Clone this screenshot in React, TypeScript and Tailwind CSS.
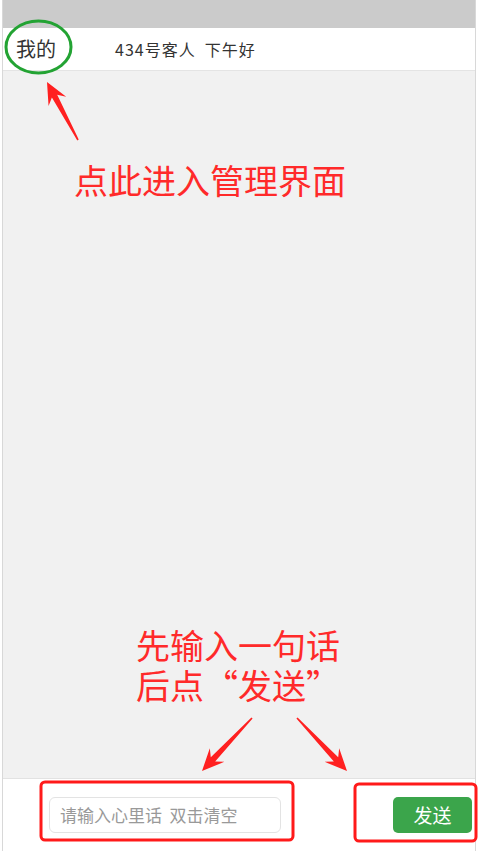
import React from "react";

const FONT = {
  fontFamily: '"Noto Sans CJK SC", "Noto Sans", sans-serif',
};

function Arrow({
  x1,
  y1,
  x2,
  y2,
}: {
  x1: number;
  y1: number;
  x2: number;
  y2: number;
}) {
  // tail at (x1,y1), tip at (x2,y2)
  const dx = x2 - x1;
  const dy = y2 - y1;
  const len = Math.hypot(dx, dy);
  const ux = dx / len;
  const uy = dy / len;
  const px = -uy;
  const py = ux;
  const headLen = 22;
  const headW = 10;
  const bx = x2 - ux * headLen;
  const by = y2 - uy * headLen;
  const neckW = 3;
  const nx = x2 - ux * (headLen - 6);
  const ny = y2 - uy * (headLen - 6);
  const pts = [
    [x1 + px * 0.8, y1 + py * 0.8],
    [nx + px * neckW, ny + py * neckW],
    [bx + px * headW, by + py * headW],
    [x2, y2],
    [bx - px * headW, by - py * headW],
    [nx - px * neckW, ny - py * neckW],
    [x1 - px * 0.8, y1 - py * 0.8],
  ]
    .map((p) => p.join(","))
    .join(" ");
  return <polygon points={pts} fill="#ff2020" />;
}

export default function App() {
  return (
    <div
      className="relative flex h-[851px] w-[478px] flex-col overflow-hidden bg-white"
      style={FONT}
    >
      <div className="mx-[2px] flex flex-1 flex-col border-x border-[#d8d8d8]">
        <div className="h-[28px] bg-[#cbcbcb]" />
        <div className="flex h-[43px] items-center border-b border-[#e4e4e4] bg-white">
          <span className="ml-[13px] text-[20px] text-[#333]">我的</span>
          <span className="ml-[59px] text-[16px] tracking-[1px] text-[#333]">
            434号客人&nbsp;&nbsp;下午好
          </span>
        </div>
        <div className="flex-1 bg-[#f1f1f1]" />
        <div className="flex h-[73px] items-center border-t border-[#e2e2e2] bg-white">
          <div className="ml-[46px] flex h-[36px] w-[232px] items-center rounded-[6px] border border-[#e3e3e3] bg-white px-[10px]">
            <span className="text-[17px] text-[#999]">请输入心里话&nbsp;&nbsp;双击清空</span>
          </div>
          <div className="ml-auto mr-[3px] flex h-[36px] w-[79px] items-center justify-center rounded-[5px] bg-[#3ba54b]">
            <span className="text-[19px] text-white">发送</span>
          </div>
        </div>
      </div>

      {/* annotations */}
      <svg
        className="pointer-events-none absolute left-0 top-0"
        width={478}
        height={851}
      >
        <ellipse
          cx={38.5}
          cy={47}
          rx={32.5}
          ry={26}
          fill="none"
          stroke="#23a333"
          strokeWidth={3}
        />
        <Arrow x1={78} y1={140} x2={47} y2={82} />
        <Arrow x1={252} y1={718} x2={202} y2={771} />
        <Arrow x1={297} y1={718} x2={347} y2={771} />
        <rect
          x={41}
          y={782}
          width={252}
          height={58}
          rx={4}
          fill="none"
          stroke="#ff1a1a"
          strokeWidth={3}
        />
        <rect
          x={355}
          y={784}
          width={121}
          height={57}
          rx={4}
          fill="none"
          stroke="#ff1a1a"
          strokeWidth={3}
        />
      </svg>
      <div className="pointer-events-none absolute left-[74px] top-[158px] text-[34px] leading-[44px] text-[#ff2a2a]">
        点此进入管理界面
      </div>
      <p className="pointer-events-none absolute left-[136px] top-[625px] text-[34px] leading-[40px] text-[#ff2a2a]">
        先输入一句话
        <br />
        后点“发送”
      </p>
    </div>
  );
}
